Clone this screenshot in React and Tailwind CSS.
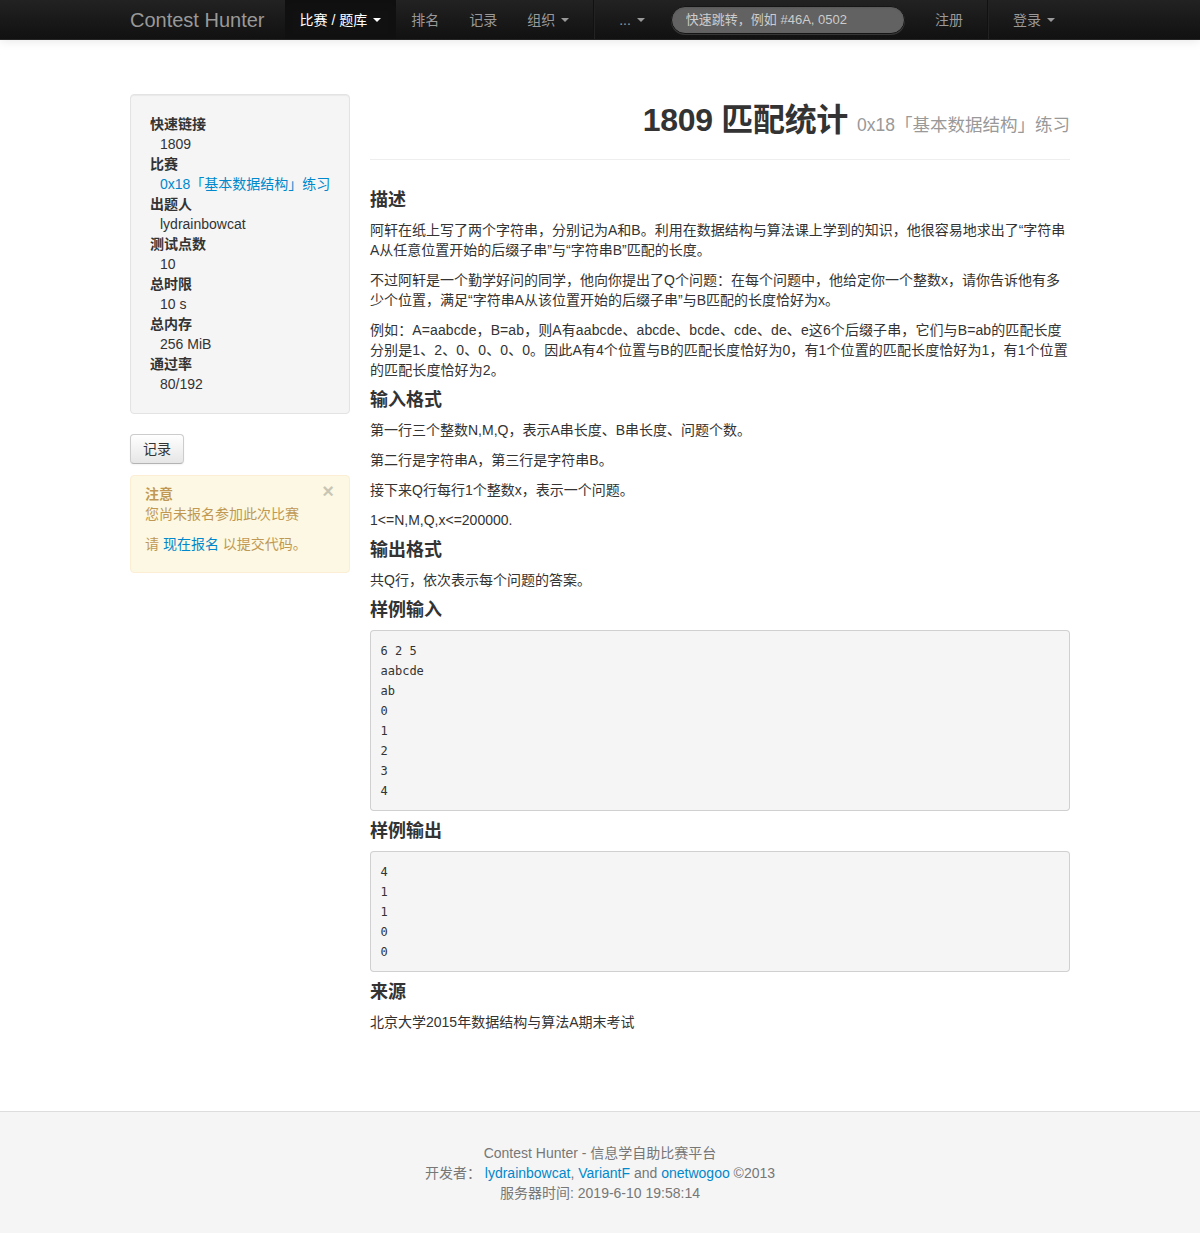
import React from 'react';

const Caret = ({ white }) => (
  <span
    className={
      white
        ? 'ml-[6px] inline-block h-0 w-0 border-x-[4px] border-t-[4px] border-x-transparent border-t-white'
        : 'ml-[6px] inline-block h-0 w-0 border-x-[4px] border-t-[4px] border-x-transparent border-t-[#999]'
    }
  />
);

const Divider = () => (
  <div className="mx-[9px] h-full border-l border-r border-l-[#111] border-r-[#222]" />
);

const NavItem = ({ children, active, caret }) => (
  <a
    className={
      active
        ? 'flex h-full items-center bg-[#111] px-[15px] text-white shadow-[inset_0_3px_8px_rgba(0,0,0,0.125)]'
        : 'flex h-full items-center px-[15px] text-[#999]'
    }
  >
    {children}
    {caret && <Caret white={active} />}
  </a>
);

const Navbar = () => (
  <div className="h-10 border-b border-[#252525] bg-linear-to-b from-[#222] to-[#111] shadow-[0_1px_10px_rgba(0,0,0,0.1)]">
    <div className="mx-auto flex h-full w-[940px] items-center text-[14px]">
      <a className="-ml-[20px] px-[20px] text-[20px] leading-[20px] text-[#999]">Contest Hunter</a>
      <NavItem active caret>比赛 / 题库</NavItem>
      <NavItem>排名</NavItem>
      <NavItem>记录</NavItem>
      <NavItem caret>组织</NavItem>
      <Divider />
      <NavItem caret>...</NavItem>
      <input
        placeholder="快速跳转，例如 #46A, 0502"
        className="ml-[11px] h-[28px] w-[234px] rounded-[15px] border border-[#151515] bg-[#626262] px-[14px] text-[13px] text-white outline-none placeholder:text-[#ccc] shadow-[inset_0_1px_2px_rgba(0,0,0,0.1),0_1px_0_rgba(255,255,255,0.15)]"
      />
      <div className="ml-auto flex h-full items-center">
        <NavItem>注册</NavItem>
        <Divider />
        <NavItem caret>登录</NavItem>
      </div>
    </div>
  </div>
);

const info = [
  ['快速链接', '1809'],
  ['比赛', '0x18「基本数据结构」练习', true],
  ['出题人', 'lydrainbowcat'],
  ['测试点数', '10'],
  ['总时限', '10 s'],
  ['总内存', '256 MiB'],
  ['通过率', '80/192'],
];

const Sidebar = () => (
  <div className="w-[220px] shrink-0">
    <div className="rounded-[4px] border border-[#e3e3e3] bg-[#f5f5f5] p-[19px] shadow-[inset_0_1px_1px_rgba(0,0,0,0.05)]">
      <dl>
        {info.map(([k, v, link]) => (
          <React.Fragment key={k}>
            <dt className="font-bold">{k}</dt>
            <dd className={link ? 'ml-[10px] whitespace-nowrap text-[#0088cc]' : 'ml-[10px] whitespace-nowrap'}>{v}</dd>
          </React.Fragment>
        ))}
      </dl>
    </div>
    <button className="mt-[20px] rounded-[4px] border border-[#ccc] border-b-[#b3b3b3] bg-linear-to-b from-white to-[#e6e6e6] px-[12px] py-[4px] text-[14px] leading-[20px] text-[#333] shadow-[inset_0_1px_0_rgba(255,255,255,0.2),0_1px_2px_rgba(0,0,0,0.05)]">
      记录
    </button>
    <div className="relative mt-[11px] rounded-[4px] border border-[#fbeed5] bg-[#fcf8e3] pb-[8px] pl-[14px] pr-[35px] pt-[8px] text-[#c09853]">
      <span className="absolute right-[15px] top-[5px] text-[20px] font-bold leading-[20px] text-black opacity-20">×</span>
      <div className="font-bold">注意</div>
      <p className="mb-[10px]">您尚未报名参加此次比赛</p>
      <p className="mb-[10px]">
        请 <a className="text-[#0088cc]">现在报名</a> 以提交代码。
      </p>
    </div>
  </div>
);

const H3 = ({ children }) => <h3 className="mb-[10px] text-[18px] font-bold leading-[20px]">{children}</h3>;
const P = ({ children, wide }) => <p className={wide ? 'mb-[10px] tracking-[0.1px]' : 'mb-[10px]'}>{children}</p>;
const Pre = ({ children }) => (
  <pre className="mb-[10px] whitespace-pre rounded-[4px] border border-[rgba(0,0,0,0.15)] bg-[#f5f5f5] p-[9.5px] font-['DejaVu_Sans_Mono',monospace] text-[12px] leading-[20px] text-[#333]">
    {children}
  </pre>
);

const Problem = () => (
  <div className="w-[700px]">
    <div className="mb-[30px] mt-[6px] border-b border-[#eee] pb-[19px]">
      <h1 className="flex h-[40px] items-baseline justify-end whitespace-nowrap text-[32px] font-bold leading-[40px]">
        <span className="tracking-[-0.3px]">1809 匹配统计</span>
        <small className="ml-[9px] text-[17.5px] font-normal leading-[20px] text-[#999]">0x18「基本数据结构」练习</small>
      </h1>
    </div>
    <H3>描述</H3>
    <P>
      阿轩在纸上写了两个字符串，分别记为A和B。利用在数据结构与算法课上学到的知识，他很容易地求出了“字符串A从任意位置开始的后缀子串”与“字符串B”匹配的长度。
    </P>
    <P>
      不过阿轩是一个勤学好问的同学，他向你提出了Q个问题：在每个问题中，他给定你一个整数x，请你告诉他有多少个位置，满足“字符串A从该位置开始的后缀子串”与B匹配的长度恰好为x。
    </P>
    <P wide>
      例如：A=aabcde，B=ab，则A有aabcde、abcde、bcde、cde、de、e这6个后缀子串，它们与B=ab的匹配长度分别是1、2、0、0、0、0。因此A有4个位置与B的匹配长度恰好为0，有1个位置的匹配长度恰好为1，有1个位置的匹配长度恰好为2。
    </P>
    <H3>输入格式</H3>
    <P>第一行三个整数N,M,Q，表示A串长度、B串长度、问题个数。</P>
    <P>第二行是字符串A，第三行是字符串B。</P>
    <P>接下来Q行每行1个整数x，表示一个问题。</P>
    <P>1&lt;=N,M,Q,x&lt;=200000.</P>
    <H3>输出格式</H3>
    <P>共Q行，依次表示每个问题的答案。</P>
    <H3>样例输入</H3>
    <Pre>{'6 2 5\naabcde\nab\n0\n1\n2\n3\n4'}</Pre>
    <H3>样例输出</H3>
    <Pre>{'4\n1\n1\n0\n0'}</Pre>
    <H3>来源</H3>
    <P>北京大学2015年数据结构与算法A期末考试</P>
  </div>
);

const Footer = () => (
  <div className="border-t border-[#ddd] bg-[#f5f5f5] pb-[30px] pt-[31px] text-center text-[#777]">
    <p>Contest Hunter - 信息学自助比赛平台</p>
    <p>
      开发者： <a className="text-[#0088cc]">lydrainbowcat</a>, <a className="text-[#0088cc]">VariantF</a> and{' '}
      <a className="text-[#0088cc]">onetwogoo</a> ©2013
    </p>
    <p>服务器时间: 2019-6-10 19:58:14</p>
  </div>
);

export default function App() {
  return (
    <div className="bg-white font-['Liberation_Sans','Noto_Sans_CJK_SC',sans-serif] text-[14px] leading-[20px] text-[#333]">
      <Navbar />
      <div className="mx-auto flex w-[940px] items-start gap-[20px] pb-[69px] pt-[54px]">
        <Sidebar />
        <Problem />
      </div>
      <Footer />
    </div>
  );
}
